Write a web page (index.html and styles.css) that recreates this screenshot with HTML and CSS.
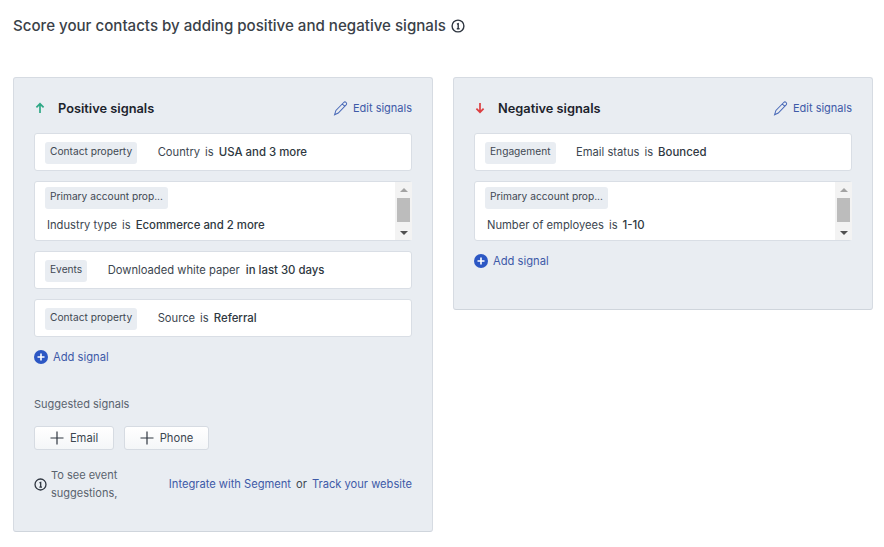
FILE: index.html
```html
<!DOCTYPE html>
<html lang="en">
<head>
<meta charset="utf-8">
<title>Contact scoring</title>
<link rel="stylesheet" href="styles.css">
</head>
<body>
<h1 class="title">Score your contacts by adding positive and negative signals
  <svg class="info big" viewBox="0 0 14 14"><circle cx="7" cy="7" r="5.9"/><path d="M5.9 5.2 7.2 4.7V9.6M5.8 9.8H8.6"/></svg>
</h1>
<main class="columns">
  <section class="panel">
    <header class="panel-head">
      <svg class="arrow" viewBox="0 0 12 12"><path class="up" d="M6 11V2M2.4 5.4 6 1.8 9.6 5.4"/></svg>
      <h2>Positive signals</h2>
      <a class="edit"><svg viewBox="0 0 16 16"><path d="M11.4 1.6c.8-.8 1.9-.7 2.6 0s.8 1.8 0 2.6L5.6 12.8 1.7 14.6l1.4-4.5zM10 3.2l2.9 2.9"/></svg>Edit signals</a>
    </header>
    <div class="card"><span class="tag">Contact property</span><span class="rule gap">Country<i>is</i><b>USA and 3 more</b></span></div>
    <div class="card scroll">
      <div class="scroll-body"><span class="tag">Primary account prop...</span><span class="rule">Industry type<i>is</i><b>Ecommerce and 2 more</b></span></div>
      <div class="bar"><span class="tri t-up"></span><span class="thumb"></span><span class="tri t-down"></span></div>
    </div>
    <div class="card"><span class="tag">Events</span><span class="rule gap">Downloaded white paper<b class="after">in last 30 days</b></span></div>
    <div class="card"><span class="tag">Contact property</span><span class="rule gap">Source<i>is</i><b>Referral</b></span></div>
    <a class="add"><svg viewBox="0 0 14 14"><circle cx="7" cy="7" r="7"/><path d="M7 3.5v7M3.5 7h7"/></svg>Add signal</a>
    <p class="suggest">Suggested signals</p>
    <div class="buttons">
      <button class="btn email"><svg viewBox="0 0 14 14"><path d="M7 .5v13M.5 7h13"/></svg>Email</button>
      <button class="btn phone"><svg viewBox="0 0 14 14"><path d="M7 .5v13M.5 7h13"/></svg>Phone</button>
    </div>
    <div class="hint">
      <svg class="info" viewBox="0 0 14 14"><circle cx="7" cy="7" r="5.9"/><path d="M5.9 5.2 7.2 4.7V9.6M5.8 9.8H8.6"/></svg>
      <span class="hint-text">To see event suggestions,</span>
      <span class="hint-links"><a>Integrate with Segment</a><span>or</span><a>Track your website</a></span>
    </div>
  </section>
  <section class="panel short">
    <header class="panel-head">
      <svg class="arrow" viewBox="0 0 12 12"><path class="down" d="M6 1v9M2.4 6.6 6 10.2 9.6 6.6"/></svg>
      <h2>Negative signals</h2>
      <a class="edit"><svg viewBox="0 0 16 16"><path d="M11.4 1.6c.8-.8 1.9-.7 2.6 0s.8 1.8 0 2.6L5.6 12.8 1.7 14.6l1.4-4.5zM10 3.2l2.9 2.9"/></svg>Edit signals</a>
    </header>
    <div class="card"><span class="tag">Engagement</span><span class="rule gap">Email status<i>is</i><b>Bounced</b></span></div>
    <div class="card scroll">
      <div class="scroll-body"><span class="tag">Primary account prop...</span><span class="rule">Number of employees<i>is</i><b>1-10</b></span></div>
      <div class="bar"><span class="tri t-up"></span><span class="thumb"></span><span class="tri t-down"></span></div>
    </div>
    <a class="add"><svg viewBox="0 0 14 14"><circle cx="7" cy="7" r="7"/><path d="M7 3.5v7M3.5 7h7"/></svg>Add signal</a>
  </section>
</main>
</body>
</html>
```

FILE: styles.css
```css
* { box-sizing: border-box; }
html, body { margin: 0; padding: 0; }
body {
  width: 884px;
  height: 547px;
  overflow: hidden;
  background: #fff;
  color: #2f3a46;
  font-family: Inter, "Liberation Sans", sans-serif;
  font-size: 11px;
}
.title {
  margin: 0;
  padding: 16px 0 0 13px;
  height: 77px;
  font-size: 15.1px;
  line-height: 20px;
  font-weight: 500;
  color: #3a4148;
  display: flex;
  gap: 5px;
  align-items: flex-start;
}
.info { width: 14px; height: 14px; fill: none; stroke: #2f3640; stroke-width: 1.4; flex: none; }
.big { margin-top: 3px; }
.columns { display: flex; gap: 20px; padding-left: 13px; align-items: flex-start; }
.panel {
  width: 420px;
  height: 455px;
  padding: 19px 20px 0;
  background: #e9edf2;
  border: 1px solid #d6dbe2;
  border-bottom-color: #cfd5dc;
  border-radius: 3px;
}
.panel.short { height: 233px; }
.panel-head { display: flex; align-items: center; height: 22px; margin-bottom: 14px; }
.arrow { width: 12px; height: 12px; fill: none; stroke-width: 1.7; margin-right: 12px; flex: none; }
.up { stroke: #2fa886; }
.down { stroke: #dc3f42; }
.panel-head h2 { margin: 0; font-size: 12.8px; font-weight: 600; color: #1c232c; flex: 1; }
.edit { display: flex; align-items: center; gap: 5px; color: #3e5aa8; font-size: 11px; }
.edit svg { width: 15px; height: 15px; fill: none; stroke: #4a6ab8; stroke-width: 1.1; }
.card {
  display: flex;
  align-items: center;
  height: 38px;
  margin-bottom: 10px;
  padding: 0 10px;
  background: #fff;
  border: 1px solid #d9dee5;
  border-radius: 3px;
}
.tag {
  display: inline-block;
  height: 22px;
  padding: 0 5px;
  margin-top: 1px;
  line-height: 18px;
  background: #e9edf2;
  border-radius: 3px;
  font-size: 10.2px;
  color: #3f4852;
  white-space: nowrap;
}
.rule { font-size: 11.2px; color: #3c4650; white-space: nowrap; }
.rule.gap { margin-left: 20.5px; }
.rule i { font-style: normal; margin: 0 5px; }
.rule b { font-size: 11.4px; font-weight: 500; color: #2f3841; }
.rule b.after { margin-left: 6px; }
.scroll { height: 60px; padding: 0 0 0 10px; align-items: stretch; }
.scroll-body { flex: 1; display: flex; flex-direction: column; align-items: flex-start; padding-top: 5px; }
.scroll-body .rule { margin-top: 9px; margin-left: 2px; }
.scroll-body .tag { margin-top: 0; }
.bar { width: 17px; margin-right: -1px; display: flex; flex-direction: column; align-items: center; background: #f3f3f3; padding: 6px 0 5px; }
.tri { width: 0; height: 0; border-left: 4px solid transparent; border-right: 4px solid transparent; flex: none; }
.t-up { border-bottom: 4px solid #a3a3a3; }
.t-down { border-top: 4px solid #505050; margin-top: auto; }
.thumb { width: 13px; height: 24px; background: #bcbcbc; margin-top: 6px; }
.add { display: flex; align-items: center; gap: 5px; height: 16px; margin-top: 12px; color: #3e5aa8; font-size: 11.2px; }
.add svg { width: 14px; height: 14px; }
.add circle { fill: #2c57c4; }
.add path { stroke: #fff; stroke-width: 1.6; fill: none; }
.suggest { margin: 31px 0 0; font-size: 11px; line-height: 16px; color: #59636e; }
.buttons { display: flex; gap: 10px; margin-top: 14px; }
.btn {
  display: flex;
  align-items: center;
  justify-content: center;
  gap: 6px;
  height: 24px;
  padding: 0;
  background: linear-gradient(#fff, #f4f6f8);
  border: 1px solid #d6dbe2;
  border-radius: 3px;
  font: inherit;
  font-size: 11.2px;
  color: #3c4650;
}
.btn svg { width: 14px; height: 14px; fill: none; stroke: #2f3640; stroke-width: 1.2; }
.email { width: 80px; }
.phone { width: 85px; }
.hint { display: flex; align-items: center; margin-top: 16px; }
.hint .info { width: 13px; height: 13px; margin-right: 4px; }
.hint-text { width: 90px; font-size: 11px; line-height: 18px; color: #59636e; }
.hint-links { margin-left: auto; display: flex; gap: 5px; font-size: 11.15px; color: #3c4650; white-space: nowrap; }
.hint-links a { color: #3e5aa8; }
```
